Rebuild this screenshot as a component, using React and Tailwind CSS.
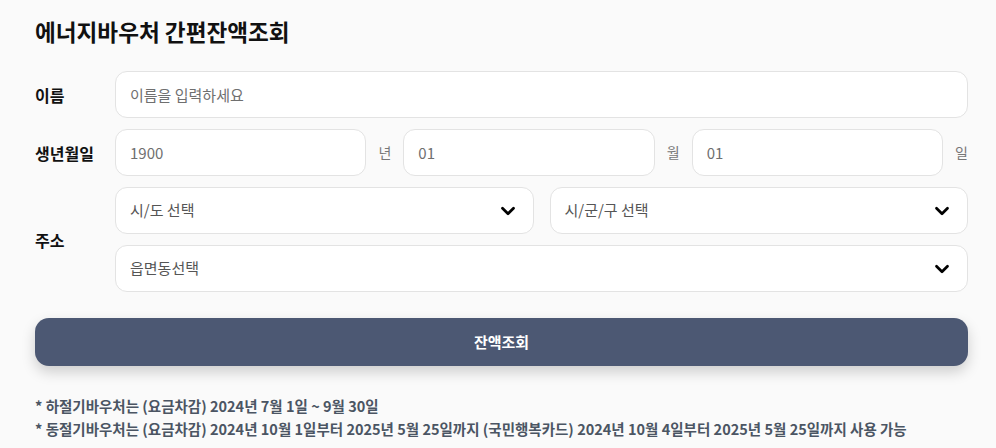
import { ChevronDown } from 'lucide-react';

const font = { fontFamily: '"Noto Sans CJK KR", "Noto Sans", sans-serif' };

function Field({ placeholder, className = '' }) {
  return (
    <input
      placeholder={placeholder}
      className={`h-[47px] min-w-0 rounded-xl border border-[#e3e3e3] bg-white px-[14px] text-[15px] text-[#333] placeholder:text-[#6f6f6f] outline-none ${className}`}
    />
  );
}

function Select({ label, className = '' }) {
  return (
    <div className={`flex h-[47px] items-center justify-between rounded-xl border border-[#e3e3e3] bg-white pl-[14px] pr-[14px] ${className}`}>
      <span className="text-[15px] text-[#555]">{label}</span>
      <ChevronDown size={22} strokeWidth={3} className="text-black" />
    </div>
  );
}

export default function App() {
  return (
    <div className="min-h-[448px] bg-[#fafafa] pl-[35px] pr-[28px] pt-[13px]" style={font}>
      <h1 className="text-[22.6px] font-bold text-[#111] leading-[38px]">에너지바우처 간편잔액조회</h1>

      <div className="mt-[20px] flex flex-col gap-[11px]">
        <div className="flex items-center">
          <div className="w-[80px] text-[16px] font-bold text-[#111]">이름</div>
          <Field placeholder="이름을 입력하세요" className="flex-1" />
        </div>

        <div className="flex items-center">
          <div className="w-[80px] text-[16px] font-bold text-[#111]">생년월일</div>
          <div className="flex flex-1 items-center gap-3">
            <Field placeholder="1900" className="flex-1" />
            <span className="text-[14px] text-[#777]">년</span>
            <Field placeholder="01" className="flex-1" />
            <span className="text-[14px] text-[#777]">월</span>
            <Field placeholder="01" className="flex-1" />
            <span className="text-[14px] text-[#777]">일</span>
          </div>
        </div>

        <div className="flex items-center">
          <div className="w-[80px] text-[16px] font-bold text-[#111]">주소</div>
          <div className="flex flex-1 flex-col gap-[11px]">
            <div className="flex gap-4">
              <Select label="시/도 선택" className="flex-1" />
              <Select label="시/군/구 선택" className="flex-1" />
            </div>
            <Select label="읍면동선택" />
          </div>
        </div>
      </div>

      <button className="mt-[26px] flex h-[48px] w-full items-center justify-center rounded-[14px] bg-[#4c5873] text-[15px] font-bold text-white shadow-[0_6px_14px_rgba(0,0,0,0.18)]">
        잔액조회
      </button>

      <div className="mt-[28px] text-[14.5px] font-semibold leading-[23px] text-[#4b5563]">
        <p>* 하절기바우처는 (요금차감) 2024년 7월 1일 ~ 9월 30일</p>
        <p>* 동절기바우처는 (요금차감) 2024년 10월 1일부터 2025년 5월 25일까지 (국민행복카드) 2024년 10월 4일부터 2025년 5월 25일까지 사용 가능</p>
      </div>
    </div>
  );
}
